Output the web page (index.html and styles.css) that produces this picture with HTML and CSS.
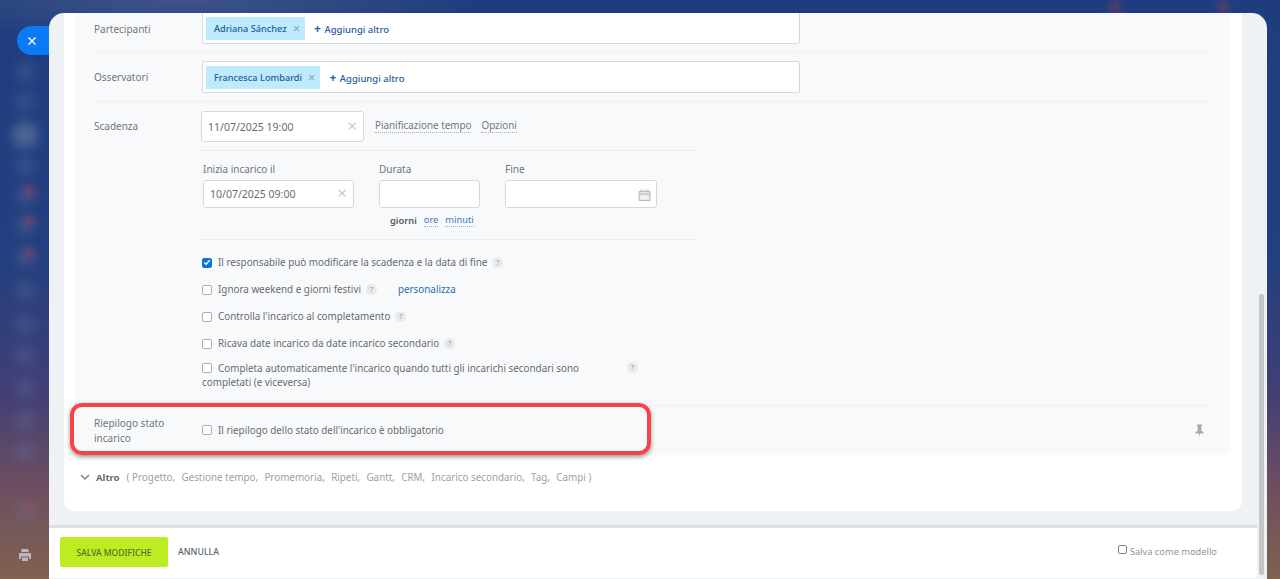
FILE: index.html
```html
<!DOCTYPE html>
<html lang="it">
<head>
<meta charset="utf-8">
<title>Modifica incarico</title>
<link rel="stylesheet" href="styles.css">
</head>
<body>
<div class="desktop">
  <div class="blob b1"></div><div class="blob b2"></div><div class="blob b3"></div><div class="blob b4"></div>
  <div class="blob b5"></div><div class="blob b6"></div><div class="blob b7"></div><div class="blob b8"></div>
  <div class="blob b9"></div><div class="blob b10"></div><div class="blob b11"></div><div class="blob b12"></div>
  <div class="blob b13"></div><div class="blob b14"></div>
  <div class="red r1"></div><div class="red r2"></div><div class="red r3"></div><div class="red r4"></div><div class="red r5"></div><div class="red r6"></div>
  <svg class="printer" width="14" height="14" viewBox="0 0 14 14"><path d="M3.500 1h7v3h-7zM1 5h12v6h-2V8.500H3V11H1zM4 9.500h6V13H4z" fill="#c9c6cc"/></svg>
  <button class="close-tab" aria-label="Chiudi"><svg width="10" height="10" viewBox="0 0 10 10"><path d="M1.500 1.500l7 7M8.500 1.500l-7 7" stroke="#fff" stroke-width="1.400" fill="none"/></svg></button>

  <main class="panel">
    <div class="scroll">
      <section class="card">
        <div class="block">
          <div class="row row-first">
            <div class="label">Partecipanti</div>
            <div class="selector"><span class="tag">Adriana Sánchez<i class="tag-x">×</i></span><span class="add"><b>+</b> Aggiungi altro</span></div>
          </div>
          <div class="row row-second">
            <div class="label">Osservatori</div>
            <div class="selector"><span class="tag">Francesca Lombardi<i class="tag-x">×</i></span><span class="add"><b>+</b> Aggiungi altro</span></div>
          </div>
          <div class="row row-deadline">
            <div class="label label-deadline">Scadenza</div>
            <div class="deadline">
              <div class="deadline-top">
                <div class="field field-main">11/07/2025 19:00<i class="clear">×</i></div>
                <span class="dash">Pianificazione tempo</span>
                <span class="dash">Opzioni</span>
              </div>
              <div class="dates">
                <div class="col col-start"><div class="cap">Inizia incarico il</div><div class="field">10/07/2025 09:00<i class="clear">×</i></div></div>
                <div class="col col-dur">
                  <div class="cap">Durata</div><div class="field"></div>
                  <div class="units"><b>giorni</b><span class="dash dash-blue">ore</span><span class="dash dash-blue">minuti</span></div>
                </div>
                <div class="col col-end">
                  <div class="cap">Fine</div>
                  <div class="field field-cal"><svg width="13" height="12" viewBox="0 0 13 12"><path d="M1 2.500h11v9H1z M1 5h11" stroke="#b5babd" fill="#e6e8ea"/><path d="M3 .5v2M5 .5v2M8 .5v2M10 .5v2" stroke="#b5babd"/><path d="M4 7h2v2.500H4zM7.500 7h1.500v2.500H7.500z" fill="#fff"/></svg></div>
                </div>
              </div>
              <div class="opts">
                <label class="opt opt1"><span class="check on"><svg width="9" height="9" viewBox="0 0 9 9"><path d="M1.500 4.500l2 2 4-4.500" stroke="#fff" stroke-width="1.500" fill="none"/></svg></span>Il responsabile può modificare la scadenza e la data di fine<i class="help">?</i></label>
                <label class="opt opt2"><span class="check"></span>Ignora weekend e giorni festivi<i class="help">?</i><span class="custom">personalizza</span></label>
                <label class="opt opt3"><span class="check"></span>Controlla l'incarico al completamento<i class="help">?</i></label>
                <label class="opt opt4"><span class="check"></span>Ricava date incarico da date incarico secondario<i class="help">?</i></label>
                <div class="opt-wrap"><label class="opt-long"><span class="check"></span>Completa automaticamente l'incarico quando tutti gli incarichi secondari sono completati (e viceversa)</label><i class="help">?</i></div>
              </div>
            </div>
          </div>
          <div class="row row-summary">
            <div class="label">Riepilogo stato incarico</div>
            <label class="opt-summary"><span class="check"></span>Il riepilogo dello stato dell'incarico è obbligatorio</label>
            <svg class="pin" width="9" height="14" viewBox="0 0 9 14"><path d="M2 .5h5v1.500L6.300 2.500v4L8.500 8.500V9.500H5L4.500 13.500 4 9.500H.5V8.500L2.700 6.500v-4L2 2z" fill="#a4a9ad"/></svg>
          </div>
        </div>
        <div class="more">
          <svg width="10" height="6" viewBox="0 0 10 6"><path d="M1 1l4 4 4-4" stroke="#7f868c" stroke-width="1.500" fill="none"/></svg>
          <b>Altro</b>
          <span class="more-list"><span>( Progetto,</span><span>Gestione tempo,</span><span>Promemoria,</span><span>Ripeti,</span><span>Gantt,</span><span>CRM,</span><span>Incarico secondario,</span><span>Tag,</span><span>Campi )</span></span>
        </div>
      </section>
      <footer class="footer">
        <button class="save">SALVA MODIFICHE</button>
        <span class="cancel">ANNULLA</span>
        <label class="template"><span class="check check-t"></span>Salva come modello</label>
      </footer>
    </div>
    <div class="scrollbar"></div>
  </main>
  <div class="callout"></div>
</div>
</body>
</html>
```
FILE: styles.css
```css
* { box-sizing: border-box; }
html, body { margin: 0; height: 100%; overflow: hidden; }
body { font-family: "Noto Sans", "Open Sans", sans-serif; font-size: 10px; color: #646b72; }
.desktop {
  position: relative; width: 1280px; height: 579px; overflow: hidden; padding: 13px 13px 0 49px;
  background:
    radial-gradient(ellipse 300px 40px at 180px 0, #3f5487 0, transparent 100%),
    linear-gradient(180deg, #1f3d7e 0, #233f80 45%, #423f74 68%, #6f4f5f 85%, #7f6250 100%);
}
.blob { position: absolute; left: 15px; width: 20px; height: 20px; border-radius: 50%; background: #66789f; opacity: .32; filter: blur(6px); }
.b1 { top: 62px; } .b2 { top: 92px; } .b3 { top: 122px; width: 26px; height: 26px; left: 12px; opacity: .7; }
.b4 { top: 156px; } .b5 { top: 186px; } .b6 { top: 216px; } .b7 { top: 248px; } .b8 { top: 280px; }
.b9 { top: 314px; } .b10 { top: 346px; } .b11 { top: 378px; } .b12 { top: 410px; } .b13 { top: 442px; } .b14 { top: 500px; }
.red { position: absolute; width: 10px; height: 10px; border-radius: 50%; background: #c8404a; opacity: .55; filter: blur(4px); }
.r1 { left: 24px; top: 186px; } .r2 { left: 24px; top: 216px; } .r3 { left: 24px; top: 248px; } .r4 { left: 1110px; top: 2px; } .r5 { left: 1218px; top: 2px; } .r6 { left: 24px; top: 502px; opacity: .3; }
.printer { position: absolute; left: 18px; top: 548px; opacity: .85; }
.close-tab { position: absolute; left: 17px; top: 26px; width: 34px; height: 29px; padding: 0 4px 0 0; border: 0; border-radius: 15px 0 0 15px; background: #0b7bf5; display: flex; align-items: center; justify-content: center; }

.panel { position: relative; height: 566px; background: #eef2f4; border-radius: 15px 15px 0 0; overflow: hidden; }
.scroll { display: flex; flex-direction: column; height: 565px; }
.card { margin: 0 25px 0 15px; height: 498px; background: #fff; border-radius: 0 0 10px 10px; padding: 0 12px 0 11px; }
.block { height: 442px; background: #f8f9fb; border-radius: 0 0 8px 8px; padding: 0 18px; }
.row { display: flex; border-bottom: 1px solid #eef0f2; }
.label { width: 108px; margin-left: 1px; flex: none; line-height: 15px; color: #6f767c; }
.row-first { height: 40px; align-items: flex-start; }
.row-first .label { padding-top: 9px; }
.row-first .selector { margin-top: -1px; }
.row-second { height: 49px; padding-top: 8px; }
.row-second .label { padding-top: 9px; }
.selector { width: 598px; height: 32px; padding: 4px 3px; background: #fff; border: 1px solid #d5d9dc; border-radius: 2px; display: flex; align-items: center; }
.tag { height: 23px; padding: 0 5px 0 8px; background: #bdeafc; color: #1f5f96; font-weight: 500; font-size: 9.200px; display: flex; align-items: center; }
.tag-x { font-style: normal; color: #8fa3ad; font-size: 13px; margin-left: 6px; font-weight: 400; }
.add { margin-left: 9px; color: #2b5a9c; font-weight: 500; font-size: 9.500px; }
.add b { font-weight: 700; font-size: 12px; margin-right: 1px; }
.row-deadline { height: 304px; padding-top: 8px; }
.label-deadline { padding-top: 9px; }
.deadline { width: 496px; margin-left: -1px; }
.deadline-top { display: flex; align-items: center; height: 32px; }
.field { position: relative; height: 28px; background: #fff; border: 1px solid #d5d9dc; border-radius: 3px; font-size: 10.500px; line-height: 26px; padding-left: 6px; color: #666c72; }
.field-main { width: 163px; height: 31px; line-height: 30px; padding-left: 6px; margin-right: 11px; }
.clear { position: absolute; right: 6px; top: -1px; font-style: normal; color: #c7ccd0; font-size: 17px; }
.dash { border-bottom: 1px dotted #a9b4c0; color: #6f7780; font-size: 9.850px; line-height: 13px; margin-right: 10px; }
.dates { margin: 8px 0 0 1px; padding: 10px 0 0 1px; border-top: 1px solid #e9ecee; display: flex; height: 90px; border-bottom: 1px solid #e9ecee; width: 495px; }
.cap { height: 19px; line-height: 17px; color: #6f767c; }
.col-start { width: 176px; }
.col-start .field { width: 151px; padding-left: 6px; }
.col-dur { width: 126px; }
.col-dur .field { width: 101px; }
.col-end .field { width: 152px; }
.field-cal svg { position: absolute; right: 5px; top: 8px; }
.units { display: flex; gap: 7px; margin: 5px 0 0 11px; align-items: center; font-size: 9.300px; }
.units b { font-weight: 600; color: #555b61; }
.dash-blue { color: #3f78b8; margin: 0; font-size: 9.300px; border-bottom-color: #8fb0d6; }
.opts { padding: 9px 0 0 1px; font-size: 9.850px; }
.opt { height: 27px; display: flex; align-items: center; color: #646b72; line-height: 13px; }
.check { flex: none; display: inline-flex; align-items: center; justify-content: center; width: 10px; height: 10px; margin-right: 6px; border: 1px solid #a9aeb3; border-radius: 2px; background: #fff; }
.check.on { background: #0f74d8; border-color: #0f74d8; }
.help { flex: none; display: inline-block; width: 11px; height: 11px; border-radius: 50%; background: #e8eaec; color: #949a9f; font-style: normal; font-size: 7px; line-height: 11px; text-align: center; margin-left: 5px; }
.custom { margin-left: 21px; color: #2f6cb0; }
.opt-wrap { display: flex; width: 436px; align-items: flex-start; padding-top: 4px; height: 40px; }
.opt-long { width: 425px; line-height: 14px; padding-right: 30px; }
.opt-long .check { vertical-align: -1px; margin-right: 6px; }
.opt-wrap .help { margin: 1px 0 0 0; }
.row-summary { position: relative; border-bottom: 0; height: 49px; align-items: center; }
.row-summary .label { padding-right: 30px; }
.opt-summary { display: flex; align-items: center; font-size: 9.850px; margin-top: -2px; }
.pin { position: absolute; right: 8px; top: 18px; }
.more { display: flex; align-items: center; height: 44px; padding-left: 5px; color: #9aa0a5; font-size: 9.850px; }
.more b { margin: 0 7px 0 6px; color: #646b72; font-weight: 700; font-size: 9.500px; }
.more-list { display: flex; gap: 6.300px; }
.footer { position: relative; flex: 1; margin: 14px 10px 0 0; background: #fff; border-top: 3px solid #dde1e4; display: flex; align-items: center; padding: 0 40px 3px 11px; }
.save { width: 108px; height: 30px; border: 0; border-radius: 2px; background: #bbed21; color: #5a6a30; font: 500 8.500px "Noto Sans", sans-serif; padding: 1px 0 0; }
.cancel { margin: 1px 0 0 10px; color: #5c6369; font-weight: 500; font-size: 8.800px; }
.template { margin-left: auto; display: flex; align-items: center; color: #8e959b; font-size: 9.300px; margin-top: -1px; }
.check-t { width: 9px; height: 9px; margin-right: 3px; border-color: #7f868c; margin-top: -3px; }
.scrollbar { position: absolute; right: 3px; top: 281px; width: 5px; height: 281px; background: #c3c7ca; border-radius: 2px; }
.callout { position: absolute; left: 70px; top: 403px; width: 581px; height: 52px; border: 4px solid #f8434a; border-radius: 12px; box-shadow: 0 2px 4px rgba(60, 60, 60, .55); }
```
